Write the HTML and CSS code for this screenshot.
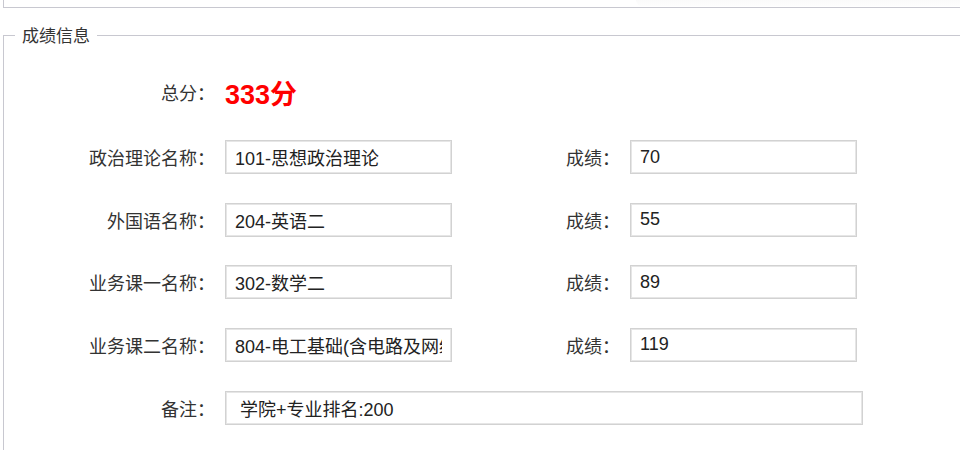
FILE: index.html
```html
<!DOCTYPE html>
<html lang="zh-CN">
<head>
<meta charset="utf-8">
<title>成绩信息</title>
<link rel="stylesheet" href="styles.css">
</head>
<body>
<div class="top"><div class="shade"></div></div>
<fieldset class="panel">
  <legend class="legend">成绩信息</legend>
  <div class="row total-row">
    <span class="label">总分：</span>
    <span class="total">333分</span>
  </div>
  <div class="row">
    <span class="label">政治理论名称：</span>
    <input class="field" type="text" value="101-思想政治理论">
    <span class="label label-score">成绩：</span>
    <input class="field" type="text" value="70">
  </div>
  <div class="row">
    <span class="label">外国语名称：</span>
    <input class="field" type="text" value="204-英语二">
    <span class="label label-score">成绩：</span>
    <input class="field" type="text" value="55">
  </div>
  <div class="row">
    <span class="label">业务课一名称：</span>
    <input class="field" type="text" value="302-数学二">
    <span class="label label-score">成绩：</span>
    <input class="field" type="text" value="89">
  </div>
  <div class="row">
    <span class="label">业务课二名称：</span>
    <input class="field" type="text" value="804-电工基础(含电路及网络)">
    <span class="label label-score">成绩：</span>
    <input class="field" type="text" value="119">
  </div>
  <div class="row">
    <span class="label">备注：</span>
    <input class="field field-wide" type="text" value=" 学院+专业排名:200">
  </div>
</fieldset>
</body>
</html>
```
FILE: styles.css
```css
html, body {
  margin: 0;
  padding: 0;
  background: #ffffff;
  overflow: hidden;
  height: 450px;
}
body {
  font-family: "Liberation Sans", "Noto Sans CJK SC", sans-serif;
  color: #333333;
}
.top {
  margin-left: 3px;
  height: 7px;
  border-left: 1px solid #c8c8d0;
  border-bottom: 1px solid #c8c8d0;
  display: flex;
  justify-content: flex-end;
}
.shade {
  width: 324px;
  height: 6px;
  background: linear-gradient(#fafafa, #fdfdfd);
  border-radius: 0 0 0 6px;
}
.panel {
  margin: 15px 0 0 3px;
  padding: 0 0 0 11px;
  border: 1px solid #c8c8d0;
  border-right: none;
  border-bottom: none;
  min-height: 420px;
}
.legend {
  padding: 4px 7px 0;
  font-size: 17px;
  line-height: 20px;
  color: #333333;
}
.row {
  display: flex;
  align-items: center;
  height: 34px;
  margin-bottom: 28.67px;
}
.total-row {
  margin-top: 28px;
  margin-bottom: 31px;
}
.label {
  width: 200px;
  margin-right: 10px;
  text-align: right;
  font-size: 18px;
  color: #333333;
  white-space: nowrap;
}
.label-score {
  width: 168px;
}
.total {
  color: #ff0000;
  font-size: 27px;
  font-weight: bold;
}
.field {
  box-sizing: border-box;
  width: 227px;
  height: 34px;
  margin: 0;
  padding: 0 9px;
  border: 1px solid #d2d2d2;
  box-shadow: inset 0 0 0 1px #e6e6e6;
  border-radius: 0;
  font-family: "Liberation Sans", "Noto Sans CJK SC", sans-serif;
  font-size: 18px;
  color: #222222;
  background: #ffffff;
  outline: none;
}
.field-wide {
  width: 638px;
}
```
